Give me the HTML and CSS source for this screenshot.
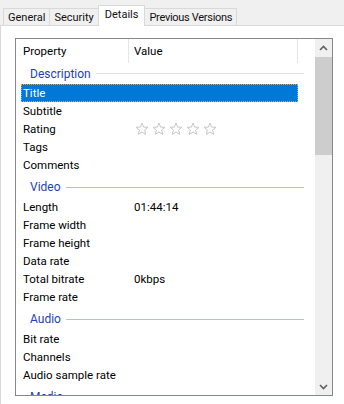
FILE: index.html
```html
<!DOCTYPE html>
<html lang="en">

<head>
    <meta charset="UTF-8">
    <meta name="viewport" content="width=device-width, initial-scale=1.0">
    <title>Details</title>
    <link rel="stylesheet" href="styles.css">
</head>

<body>
    <div class="tabs">
        <div class="tab">General</div>
        <div class="tab">Security</div>
        <div class="tab active">Details</div>
        <div class="tab tab-long">Previous Versions</div>
    </div>

    <div class="page">
        <div class="list">
            <div class="list-main">
                <div class="list-head">
                    <div class="head-col head-prop">Property</div>
                    <div class="head-col head-val">Value</div>
                </div>

                <div class="group first"><span class="group-name">Description</span><span class="group-line"></span></div>
                <div class="row selected"><span class="prop">Title</span><span class="val"></span></div>
                <div class="row"><span class="prop">Subtitle</span><span class="val"></span></div>
                <div class="row">
                    <span class="prop">Rating</span>
                    <span class="val stars">
                        <svg viewBox="0 0 14 14"><path d="M7 1 L8.6 5.1 L13 5.3 L9.6 8 L10.7 12.4 L7 10 L3.3 12.4 L4.4 8 L1 5.3 L5.4 5.1 Z"/></svg>
                        <svg viewBox="0 0 14 14"><path d="M7 1 L8.6 5.1 L13 5.3 L9.6 8 L10.7 12.4 L7 10 L3.3 12.4 L4.4 8 L1 5.3 L5.4 5.1 Z"/></svg>
                        <svg viewBox="0 0 14 14"><path d="M7 1 L8.6 5.1 L13 5.3 L9.6 8 L10.7 12.4 L7 10 L3.3 12.4 L4.4 8 L1 5.3 L5.4 5.1 Z"/></svg>
                        <svg viewBox="0 0 14 14"><path d="M7 1 L8.6 5.1 L13 5.3 L9.6 8 L10.7 12.4 L7 10 L3.3 12.4 L4.4 8 L1 5.3 L5.4 5.1 Z"/></svg>
                        <svg viewBox="0 0 14 14"><path d="M7 1 L8.6 5.1 L13 5.3 L9.6 8 L10.7 12.4 L7 10 L3.3 12.4 L4.4 8 L1 5.3 L5.4 5.1 Z"/></svg>
                    </span>
                </div>
                <div class="row"><span class="prop">Tags</span><span class="val"></span></div>
                <div class="row"><span class="prop">Comments</span><span class="val"></span></div>

                <div class="group"><span class="group-name">Video</span><span class="group-line"></span></div>
                <div class="row"><span class="prop">Length</span><span class="val">01:44:14</span></div>
                <div class="row"><span class="prop">Frame width</span><span class="val"></span></div>
                <div class="row"><span class="prop">Frame height</span><span class="val"></span></div>
                <div class="row"><span class="prop">Data rate</span><span class="val"></span></div>
                <div class="row"><span class="prop">Total bitrate</span><span class="val">0kbps</span></div>
                <div class="row"><span class="prop">Frame rate</span><span class="val"></span></div>

                <div class="group"><span class="group-name">Audio</span><span class="group-line"></span></div>
                <div class="row"><span class="prop">Bit rate</span><span class="val"></span></div>
                <div class="row"><span class="prop">Channels</span><span class="val"></span></div>
                <div class="row"><span class="prop">Audio sample rate</span><span class="val"></span></div>

                <div class="group"><span class="group-name">Media</span><span class="group-line"></span></div>
            </div>

            <div class="scrollbar">
                <div class="sb-btn">
                    <svg viewBox="0 0 17 17"><path d="M5 10 L8.5 6.5 L12 10"/></svg>
                </div>
                <div class="sb-thumb"></div>
                <div class="sb-track"></div>
                <div class="sb-btn">
                    <svg viewBox="0 0 17 17"><path d="M5 7 L8.5 10.5 L12 7"/></svg>
                </div>
            </div>
        </div>
    </div>
</body>

</html>
```

FILE: styles.css
```css
* {
    margin: 0;
    padding: 0;
    box-sizing: border-box;
}

body {
    font-family: Roboto, 'Liberation Sans', sans-serif;
    font-size: 11.5px;
    color: #000;
    background: white;
    width: 344px;
    height: 404px;
    overflow: hidden;
}

/* tab strip */
.tabs {
    height: 26px;
    background: #f0f0f0;
    border-bottom: 1px solid #d9d9d9;
    display: flex;
    align-items: flex-end;
    padding-left: 3px;
    font-size: 11px;
}

.tab {
    height: 17px;
    padding: 0 4px;
    border: 1px solid #d9d9d9;
    border-bottom: none;
    margin-right: -1px;
    display: flex;
    align-items: center;
    line-height: 1;
    color: #111;
}

.tab-long {
    letter-spacing: -0.3px;
}

.tab.active {
    height: 21px;
    margin-bottom: -1px;
    padding: 0 6px 3px;
    background: white;
    position: relative;
    z-index: 1;
}

/* page */
.page {
    height: 378px;
    border-left: 1px solid #d9d9d9;
    padding: 12px 0 0 14px;
}

.list {
    width: 318px;
    height: 358px;
    border: 1px solid #828790;
    display: flex;
    overflow: hidden;
}

.list-main {
    flex: 1;
    overflow: hidden;
}

.list-head {
    height: 24px;
    display: flex;
}

.head-col {
    height: 24px;
    display: flex;
    align-items: center;
    border-right: 1px solid #e5e5e5;
}

.head-prop {
    width: 113px;
    padding-left: 7px;
}

.head-val {
    width: 169px;
    padding-left: 5px;
}

/* groups */
.group {
    height: 24px;
    margin-left: 5px;
    width: 283px;
    padding: 2px 0 0 9px;
    display: flex;
    align-items: center;
    gap: 5px;
    color: #1f3fb0;
    font-size: 12px;
}

.group.first {
    height: 21px;
    padding-top: 0;
}

.group-line {
    flex: 1;
    height: 1px;
    background: #b8c0d8;
}

.group.first .group-line {
    background: #dbe1ea;
}

/* rows */
.row {
    height: 18px;
    margin-left: 5px;
    width: 277px;
    display: flex;
    align-items: center;
}

.prop {
    width: 113px;
    padding-left: 2px;
}

.val {
    flex: 1;
}

.row.selected {
    background: #0078d7;
    color: white;
    outline: 1px dotted #f0a040;
    outline-offset: -1px;
}

.stars {
    display: flex;
    gap: 3px;
    padding-left: 1px;
}

.stars svg {
    width: 14px;
    height: 14px;
    fill: white;
    stroke: #c8c8c8;
    stroke-width: 1;
}

/* scrollbar */
.scrollbar {
    width: 17px;
    background: #f0f0f0;
    display: flex;
    flex-direction: column;
}

.sb-btn {
    height: 18px;
    display: flex;
    align-items: center;
    justify-content: center;
}

.sb-btn svg {
    width: 17px;
    height: 17px;
    fill: none;
    stroke: #606060;
    stroke-width: 1.6;
}

.sb-thumb {
    height: 98px;
    background: #cdcdcd;
}

.sb-track {
    flex: 1;
}
```
